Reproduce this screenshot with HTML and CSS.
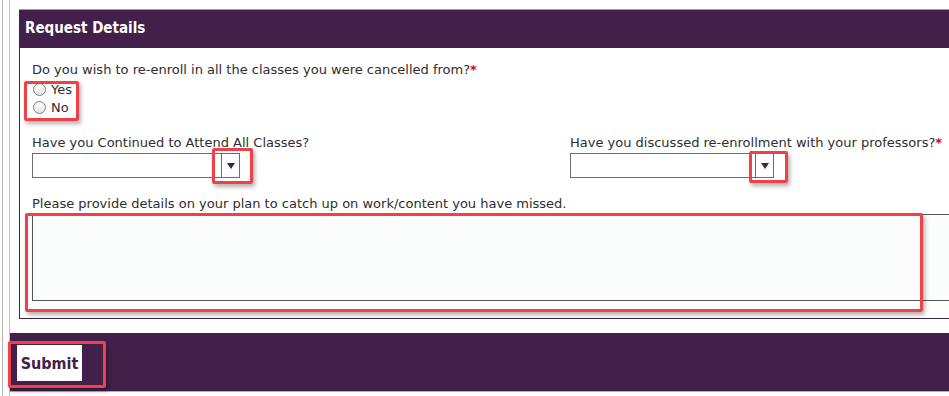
FILE: index.html
```html
<!DOCTYPE html>
<html lang="en">
<head>
  <meta charset="UTF-8">
  <title>Request Details</title>
  <link rel="stylesheet" href="styles.css">
</head>
<body>
  <div class="page">
    <div class="inner">
      <section class="panel">
        <h2 class="panel-title">Request Details</h2>
        <div class="panel-body">
          <div class="field">
            <label class="label">Do you wish to re-enroll in all the classes you were cancelled from?<span class="req">*</span></label>
            <div class="radios">
              <label class="radio"><span class="dot"></span>Yes</label>
              <label class="radio"><span class="dot"></span>No</label>
            </div>
          </div>

          <div class="row">
            <div class="field">
              <label class="label">Have you Continued to Attend All Classes?</label>
              <div class="select"><span class="arrow"></span></div>
            </div>
            <div class="field">
              <label class="label">Have you discussed re-enrollment with your professors?<span class="req">*</span></label>
              <div class="select"><span class="arrow"></span></div>
            </div>
          </div>

          <div class="field">
            <label class="label">Please provide details on your plan to catch up on work/content you have missed.</label>
            <div class="textarea"></div>
          </div>
        </div>
      </section>

      <div class="actions">
        <button class="submit">Submit</button>
      </div>
    </div>
  </div>

  <!-- annotation boxes -->
  <div class="mark mark-radios"></div>
  <div class="mark mark-select1"></div>
  <div class="mark mark-select2"></div>
  <div class="mark mark-text"></div>
  <div class="mark mark-submit"></div>
</body>
</html>
```

FILE: styles.css
```css
body {
  margin: 0;
  background: #fff;
  font-family: 'DejaVu Sans', Verdana, sans-serif;
  color: #2e2e2e;
  position: relative;
  overflow: hidden;
  height: 396px;
}

.page {
  margin-left: 2px;
  border-left: 1px solid #b5b5b5;
  padding-left: 6px;
  height: 396px;
}

.inner {
  border-left: 1px solid #c4c4c4;
  height: 396px;
  padding-top: 9px;
}

.panel {
  margin-left: 9px;
}

.panel-title {
  margin: 0;
  background: #42204a;
  border-top: 1px solid #a894ab;
  color: #fff;
  font-family: 'DejaVu Sans Condensed', 'DejaVu Sans', sans-serif;
  font-size: 15px;
  font-weight: bold;
  height: 38px;
  line-height: 37px;
  padding-left: 6px;
}

.panel-body {
  border-left: 1px solid #3d2442;
  border-bottom: 1px solid #3d2442;
  padding: 14px 0 17px 12px;
}

.label {
  display: block;
  font-size: 13px;
  line-height: 16px;
}

.req {
  color: #d0021b;
  font-weight: bold;
}

.radios {
  padding-top: 2px;
}

.radio {
  display: flex;
  align-items: center;
  gap: 5px;
  font-size: 13px;
  height: 18px;
  padding-left: 1px;
}

.dot {
  width: 11px;
  height: 11px;
  border: 1px solid #7e7e7e;
  border-radius: 50%;
  background: linear-gradient(#fdfdfd, #e4e4e4);
}

.row {
  display: grid;
  grid-template-columns: 538px 1fr;
  margin-top: 19px;
}

.select {
  position: relative;
  width: 206px;
  height: 23px;
  border: 1px solid #6d6d6d;
  margin-top: 2px;
  background: #fff;
}

.row .field:last-child .select {
  width: 202px;
}

.arrow {
  position: absolute;
  right: 0;
  top: 0;
  width: 17px;
  height: 23px;
  border-left: 1px solid #6d6d6d;
}

.arrow::after {
  content: "";
  position: absolute;
  left: 5px;
  top: 9px;
  border-left: 4px solid transparent;
  border-right: 4px solid transparent;
  border-top: 6px solid #42204a;
}

.row + .field {
  margin-top: 18px;
}

.textarea {
  margin-top: 2px;
  height: 85px;
  border: 1px solid #555;
  border-right: none;
  background: #fbfcfc;
}

.actions {
  margin-top: 14px;
  background: #42204a;
  height: 59px;
  border-bottom: 1px solid #b9aab9;
  padding: 12px 0 0 7px;
  box-sizing: border-box;
}

.submit {
  background: #fff;
  border: none;
  color: #42204a;
  font-family: 'DejaVu Sans Condensed', 'DejaVu Sans', sans-serif;
  font-size: 16px;
  font-weight: bold;
  width: 65px;
  height: 36px;
  padding: 0;
}

.mark {
  position: absolute;
  border: 3px solid #f0414b;
  box-shadow: 2px 3px 4px rgba(0, 0, 0, 0.3);
  border-radius: 2px;
}

.mark-radios {
  left: 24px;
  top: 81px;
  width: 49px;
  height: 34px;
}

.mark-select1 {
  left: 212px;
  top: 148px;
  width: 35px;
  height: 30px;
}

.mark-select2 {
  left: 749px;
  top: 151px;
  width: 33px;
  height: 26px;
}

.mark-text {
  left: 25px;
  top: 213px;
  width: 892px;
  height: 93px;
}

.mark-submit {
  left: 8px;
  top: 341px;
  width: 92px;
  height: 41px;
}
```
